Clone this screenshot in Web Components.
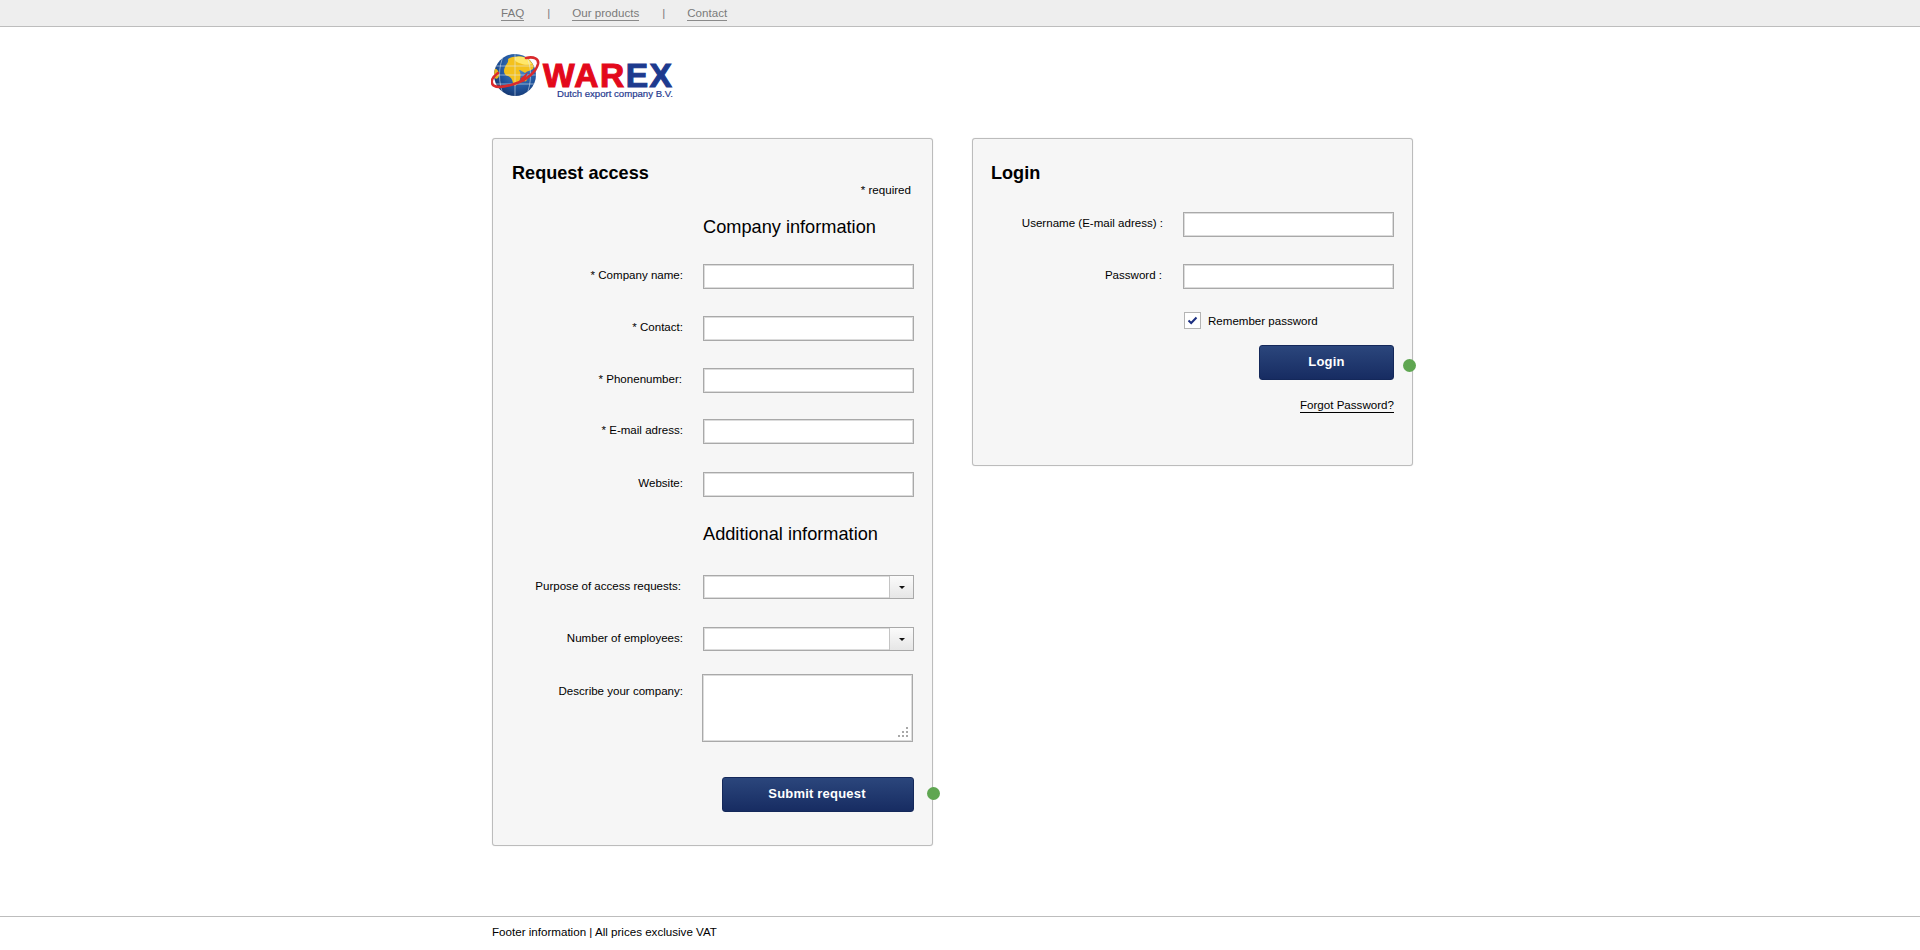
<!DOCTYPE html>
<html lang="en">
<head>
<meta charset="utf-8">
<title>Warex</title>
<style>
html,body{margin:0;padding:0;background:#fff;font-family:"Liberation Sans",Arial,sans-serif;font-size:12px;color:#000;}
</style>
</head>
<body>
<warex-page>
  <warex-topbar slot="top">
    <a>FAQ</a>
    <a>Our products</a>
    <a>Contact</a>
  </warex-topbar>
  <warex-logo slot="logo"></warex-logo>

  <warex-panel heading="Request access" style="height:708px">
    <warex-note>* required</warex-note>
    <warex-subhead style="margin-top:18px">Company information</warex-subhead>
    <warex-field label="* Company name:" style="margin-top:25px"><warex-input></warex-input></warex-field>
    <warex-field label="* Contact:" style="margin-top:27px"><warex-input></warex-input></warex-field>
    <warex-field label="* Phonenumber:" nudge="1" style="margin-top:27px"><warex-input></warex-input></warex-field>
    <warex-field label="* E-mail adress:" style="margin-top:26px"><warex-input></warex-input></warex-field>
    <warex-field label="Website:" nudge="-1" style="margin-top:28px"><warex-input></warex-input></warex-field>
    <warex-subhead style="margin-top:25px">Additional information</warex-subhead>
    <warex-field label="Purpose of access requests:" nudge="2" style="margin-top:29px"><warex-select></warex-select></warex-field>
    <warex-field label="Number of employees:" style="margin-top:28px"><warex-select></warex-select></warex-field>
    <warex-field label="Describe your company:" tall style="margin-top:23px"><warex-area></warex-area></warex-field>
    <warex-button width="192" dot-x="14" dot-y="-1" style="margin-top:35px;text-indent:-2px">Submit request</warex-button>
  </warex-panel>

  <warex-panel heading="Login" shift="-1" style="height:328px">
    <warex-field label="Username (E-mail adress) :" style="margin-top:29px"><warex-input></warex-input></warex-field>
    <warex-field label="Password :" nudge="1" style="margin-top:27px"><warex-input></warex-input></warex-field>
    <warex-check style="margin-top:23px">Remember password</warex-check>
    <warex-button width="135" dot-x="10" dot-y="3" style="margin-top:16px">Login</warex-button>
    <warex-forgot style="margin-top:18px">Forgot Password?</warex-forgot>
  </warex-panel>

  <warex-footer slot="bottom">Footer information | All prices exclusive VAT</warex-footer>
</warex-page>

<script>
function shadow(el, html){ el.attachShadow({mode:'open'}).innerHTML = html; return el.shadowRoot; }
const F='"Liberation Sans",Arial,sans-serif';

customElements.define('warex-page', class extends HTMLElement{
  constructor(){super();shadow(this,`<style>
    :host{display:flex;flex-direction:column;height:950px;overflow:hidden;}
    .wrap{width:936px;margin:0 auto;}
    .logo{height:111px;}
    .cols{display:flex;align-items:flex-start;gap:39px;}
    .spacer{flex:1;}
  </style>
  <slot name="top"></slot>
  <div class="wrap logo"><slot name="logo"></slot></div>
  <div class="wrap cols"><slot></slot></div>
  <div class="spacer"></div>
  <slot name="bottom"></slot>`);}
});

customElements.define('warex-topbar', class extends HTMLElement{
  constructor(){super();shadow(this,`<style>
    :host{display:block;height:26px;background:#eee;border-bottom:1px solid #bdbdbd;}
    .in{width:936px;margin:0 auto;box-sizing:border-box;padding-left:9px;height:26px;display:flex;align-items:flex-start;color:#7a7a7a;font:11.6px/14px ${F};}
    .link{margin-top:6px;height:14px;border-bottom:1px solid #8a8a8a;}
    .sep{margin:6px 23px 0 23px;width:2px;}
  </style><div class="in" id="in"></div>`);}
  connectedCallback(){
    const names=['FAQ','Our products','Contact'];
    const root=this.shadowRoot.getElementById('in');
    if(root.childElementCount) return;
    names.forEach((n,i)=>{
      if(i){const s=document.createElement('span');s.className='sep';s.textContent='|';root.append(s);}
      const a=document.createElement('span');a.className='link';a.textContent=n;root.append(a);
    });
    this.textContent='';
  }
});

customElements.define('warex-logo', class extends HTMLElement{
  constructor(){super();shadow(this,`<style>
    :host{display:block;padding-top:25px;height:86px;}
    .row{display:flex;align-items:flex-start;margin-left:-1px;}
    svg{display:block;flex:none;margin-top:1px;}
    .t{margin-left:1px;margin-top:8px;font-family:${F};}
    .w{font-weight:700;font-size:33.5px;line-height:31px;letter-spacing:1.5px;-webkit-text-stroke:1.1px currentColor;white-space:nowrap;}
    .r{color:#e3091b;}.b{color:#1d3a8e;}
    .s{color:#26398f;font-size:9.6px;line-height:11px;margin:-3px 0 0 14px;white-space:nowrap;-webkit-text-stroke:.2px currentColor;}
  </style>
  <div class="row">
    <svg width="51" height="50" viewBox="0 0 51 50">
      <defs>
        <radialGradient id="sea" cx=".6" cy=".35" r=".8"><stop offset="0" stop-color="#4f8ed0"/><stop offset=".55" stop-color="#22569e"/><stop offset="1" stop-color="#0f2a5e"/></radialGradient>
        <clipPath id="ball"><circle cx="24" cy="22" r="21"/></clipPath>
      </defs>
      <circle cx="24" cy="22" r="21" fill="url(#sea)"/>
      <g clip-path="url(#ball)">
        <path d="M17 6 C22 3 30 3 36 5 C42 8 44 12 42 16 C39 18 36 18 34 20 C32 19 30 17 28 17 C30 20 30 24 28 29 C26 33 23 34 22 30 C21 26 20 24 17 23 C13 22 12 18 14 14 C15 11 18 10 17 6Z" fill="#f4c11c"/>
        <path d="M24 4 C30 2 38 5 41 11 C36 13 31 11 28 10 C25 9 23 7 24 4Z" fill="#ffe76a"/>
        <path d="M33 23 C35 22 37 24 36 27 C34 30 32 28 33 23Z M3 16 C6 15 8 18 8 23 C7 26 5 27 3 24Z" fill="#e9b41c"/>
        <path d="M3 13 H45 M1 22 H47 M4 31 H44 M24 0 V44 M13 2 C7 13 7 31 13 43 M35 2 C41 13 41 31 35 43" fill="none" stroke="#e3ecf5" stroke-width=".7" opacity=".8"/>
      </g>
      <path d="M35 5 C43 3 48 6 47 11 C45 19 36 27 23 31 C11 35 2 35 1 30 C0 27 3 23 7 20" fill="none" stroke="#d92a2c" stroke-width="2.6" stroke-linecap="round"/>
      <path d="M37 19 L29 26 L33 29 Z" fill="#d92a2c"/>
    </svg>
    <div class="t">
      <div class="w"><span class="r">WAR</span><span class="b">EX</span></div>
      <div class="s">Dutch export company B.V.</div>
    </div>
  </div>`);}
});

customElements.define('warex-panel', class extends HTMLElement{
  constructor(){super();shadow(this,`<style>
    :host{display:flex;flex-direction:column;box-sizing:border-box;width:441px;flex:none;background:#f6f6f6;border:1px solid #bcbcbc;border-radius:3px;padding:23px 18px 0 19px;box-shadow:0 0 1px #ccc;}
    h2{margin:0 0 -1px;font:700 18.1px/22px ${F};color:#000;}
  </style><h2 id="h"></h2><slot></slot>`);}
  connectedCallback(){
    const h=this.shadowRoot.getElementById('h');
    h.textContent=this.getAttribute('heading')||'';
    const s=this.getAttribute('shift');
    if(s) h.style.marginLeft=s+'px';
  }
});

customElements.define('warex-note', class extends HTMLElement{
  constructor(){super();shadow(this,`<style>:host{display:block;text-align:right;padding-right:3px;font:11.6px/14px ${F};}</style><slot></slot>`);}
});

customElements.define('warex-subhead', class extends HTMLElement{
  constructor(){super();shadow(this,`<style>:host{display:block;padding-left:191px;font:18.2px/24px ${F};color:#000;}</style><slot></slot>`);}
});

customElements.define('warex-field', class extends HTMLElement{
  constructor(){super();shadow(this,`<style>
    :host{display:grid;grid-template-columns:171px 211px;column-gap:20px;align-items:start;}
    label{display:block;text-align:right;white-space:nowrap;font:11.55px/23px ${F};}
    :host([tall]) label{line-height:14px;padding-top:10px;}
  </style><label id="l"></label><div><slot></slot></div>`);}
  connectedCallback(){
    const l=this.shadowRoot.getElementById('l');
    l.textContent=this.getAttribute('label')||'';
    const n=+this.getAttribute('nudge')||0;
    if(n) l.style.paddingRight=n+'px';
  }
});

const boxCss=`box-sizing:border-box;background:#fff;border:1px solid #a9a9a9;box-shadow:0 0 0 1px #dcdcdc inset;outline:0;margin:0;padding:0 3px;font:12px ${F};display:block;`;

customElements.define('warex-input', class extends HTMLElement{
  constructor(){super();shadow(this,`<style>
    :host{display:block;height:25px;}
    input{${boxCss}width:211px;height:25px;}
  </style><input type="text">`);}
});

customElements.define('warex-select', class extends HTMLElement{
  constructor(){super();shadow(this,`<style>
    :host{display:flex;width:211px;height:24px;box-sizing:border-box;border:1px solid #a9a9a9;background:#fff;box-shadow:0 0 0 1px #dcdcdc inset;}
    .v{flex:1;}
    .a{width:23px;flex:none;border-left:1px solid #c4c4c4;background:linear-gradient(#fbfbfb,#e6e6e6);display:flex;align-items:center;justify-content:center;}
    .a i{display:block;width:0;height:0;border:3px solid transparent;border-top:3px solid #111;border-bottom:0;}
  </style><div class="v"></div><div class="a"><i></i></div>`);}
});

customElements.define('warex-area', class extends HTMLElement{
  constructor(){super();shadow(this,`<style>
    :host{display:block;position:relative;width:211px;height:68px;margin-left:-1px;}
    textarea{${boxCss}width:211px;height:68px;resize:none;}
    svg{position:absolute;right:4px;bottom:4px;}
  </style><textarea></textarea>
  <svg width="11" height="11" viewBox="0 0 11 11" fill="#a8a8a8"><rect x="8" y="0" width="2" height="2"/><rect x="4" y="4" width="2" height="2"/><rect x="8" y="4" width="2" height="2"/><rect x="0" y="8" width="2" height="2"/><rect x="4" y="8" width="2" height="2"/><rect x="8" y="8" width="2" height="2"/></svg>`);}
});

customElements.define('warex-button', class extends HTMLElement{
  constructor(){super();shadow(this,`<style>
    :host{display:block;position:relative;align-self:flex-end;box-sizing:border-box;height:35px;border:1px solid #14285a;border-radius:3px;background:linear-gradient(#2b467c,#172c62);color:#fff;font:700 13px/32px ${F};letter-spacing:.2px;text-align:center;}
    .dot{position:absolute;top:50%;left:100%;width:13px;height:13px;margin-top:-6.5px;border-radius:50%;background:#5fa651;text-indent:0;}
  </style><slot></slot><span class="dot" id="d"></span>`);}
  connectedCallback(){
    this.style.width=this.getAttribute('width')+'px';
    const d=this.shadowRoot.getElementById('d');
    d.style.marginLeft=this.getAttribute('dot-x')+'px';
    d.style.transform='translateY('+this.getAttribute('dot-y')+'px)';
  }
});

customElements.define('warex-check', class extends HTMLElement{
  constructor(){super();shadow(this,`<style>
    :host{display:flex;align-items:center;gap:7px;margin-left:192px;height:17px;font:11.55px/15px ${F};}
    .b{width:17px;height:17px;box-sizing:border-box;border:1px solid #b4b4b4;background:#fff;display:flex;align-items:center;justify-content:center;}
    .t{padding-top:1px;}
  </style><span class="b"><svg width="11" height="9" viewBox="0 0 11 9"><path d="M1.5 4.5 L4.2 7 L9.5 1.5" fill="none" stroke="#1c2f80" stroke-width="2"/></svg></span><span class="t"><slot></slot></span>`);}
});

customElements.define('warex-forgot', class extends HTMLElement{
  constructor(){super();shadow(this,`<style>
    :host{display:block;align-self:flex-end;margin-right:0;font:11.6px/14px ${F};border-bottom:1px solid #000;}
  </style><slot></slot>`);}
});

customElements.define('warex-footer', class extends HTMLElement{
  constructor(){super();shadow(this,`<style>
    :host{display:block;height:34px;border-top:1px solid #bdbdbd;box-sizing:border-box;}
    div{width:936px;margin:0 auto;font:11.6px/29px ${F};color:#000;}
  </style><div><slot></slot></div>`);}
});
</script>
</body>
</html>
